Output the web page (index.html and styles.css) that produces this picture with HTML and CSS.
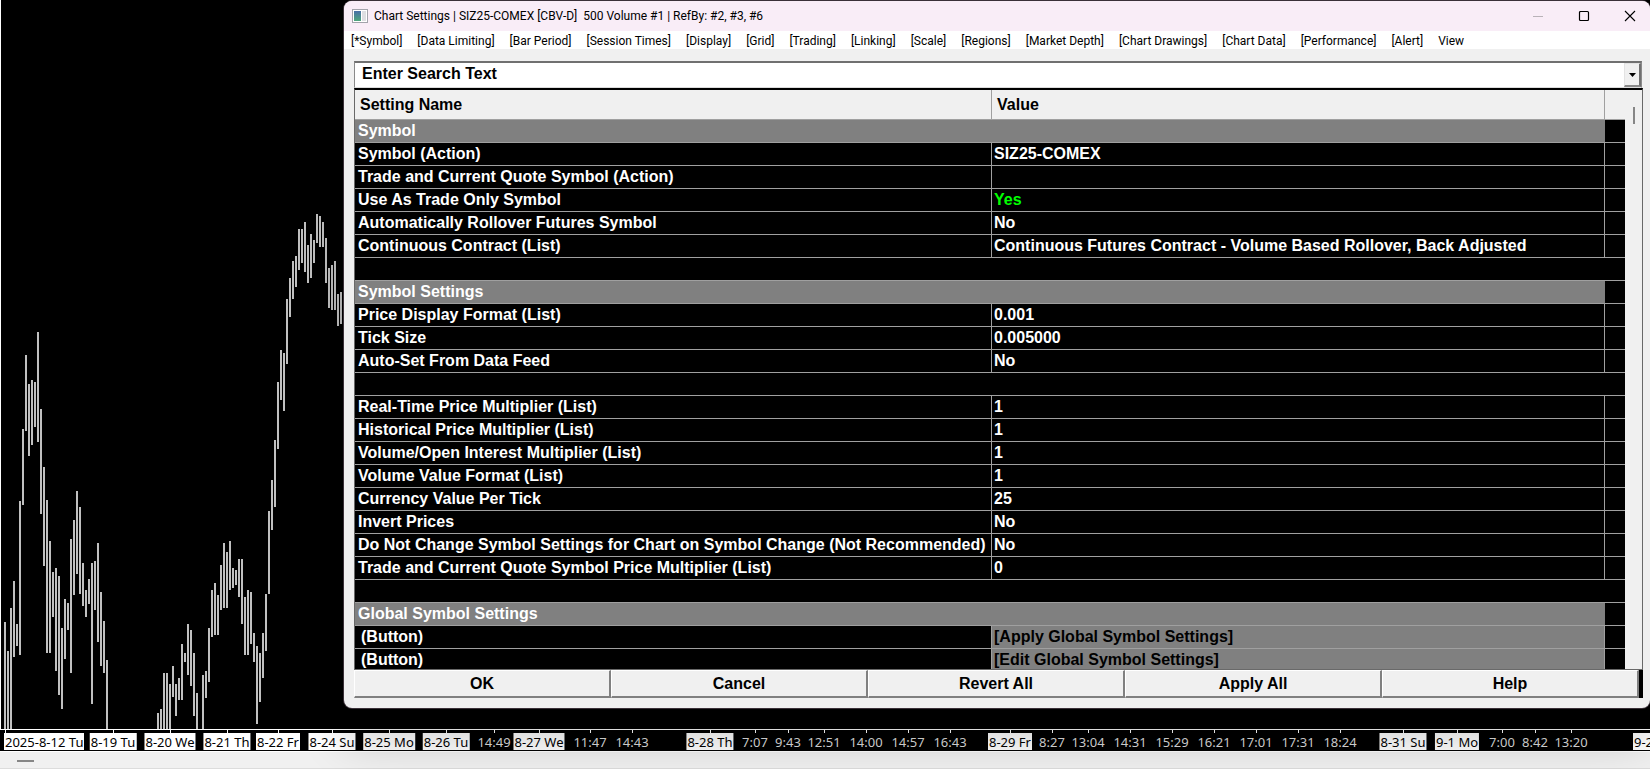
FILE: index.html
```
<!DOCTYPE html>
<html lang="en">
  <head>
  <meta charset="utf-8">
  <meta name="viewport" content="width=device-width, initial-scale=1">
  <title>Chart Settings</title>
  <link rel="stylesheet" href="styles.css">
  </head>
  <body>
    <main class="chart">
      <svg id="bars" class="bars" aria-hidden="true"></svg>
    </main>
    <div id="axis" class="axis"></div>
    <footer class="status"><span class="thumb"></span></footer>

    <section class="dialog" aria-label="Chart Settings">
      <header class="titlebar">
        <svg class="app-icon" width="16" height="14" viewBox="0 0 16 14">
          <defs>
            <linearGradient id="pane" x1="0" y1="0" x2="0" y2="1">
              <stop offset="0" stop-color="#4a6ea8"/>
              <stop offset="1" stop-color="#4fa67c"/>
            </linearGradient>
          </defs>
          <rect x="0.5" y="0.5" width="15" height="13" fill="#fff" stroke="#a3a3ab"/>
          <rect x="2" y="2" width="7" height="10" fill="url(#pane)"/>
          <rect x="10" y="2" width="4" height="10" fill="#dedee2"/>
        </svg>
        <h1>Chart Settings | SIZ25-COMEX [CBV-D]&nbsp; 500 Volume #1 | RefBy: #2, #3, #6</h1>
        <div class="window-buttons">
          <button type="button" aria-label="Minimize" disabled>
            <svg width="12" height="12" viewBox="0 0 12 12"><path d="M1 6.5h10" stroke="#b9b2b8" fill="none"/></svg>
          </button>
          <button type="button" aria-label="Maximize">
            <svg width="12" height="12" viewBox="0 0 12 12"><rect x="1.5" y="1.5" width="9" height="9" rx="1" stroke="#000" stroke-width="1.2" fill="none"/></svg>
          </button>
          <button type="button" aria-label="Close">
            <svg width="12" height="12" viewBox="0 0 12 12"><path d="M1 1l10 10M11 1L1 11" stroke="#000" stroke-width="1.1" fill="none"/></svg>
          </button>
        </div>
      </header>

      <nav class="menu">
        <button type="button">[*Symbol]</button>
        <button type="button">[Data Limiting]</button>
        <button type="button">[Bar Period]</button>
        <button type="button">[Session Times]</button>
        <button type="button">[Display]</button>
        <button type="button">[Grid]</button>
        <button type="button">[Trading]</button>
        <button type="button">[Linking]</button>
        <button type="button">[Scale]</button>
        <button type="button">[Regions]</button>
        <button type="button">[Market Depth]</button>
        <button type="button">[Chart Drawings]</button>
        <button type="button">[Chart Data]</button>
        <button type="button">[Performance]</button>
        <button type="button">[Alert]</button>
        <button type="button">View</button>
      </nav>

      <div class="content">
        <div class="search">
          <input type="text" value="Enter Search Text" aria-label="Search settings">
          <button type="button" aria-label="Show previous searches">
            <svg width="7" height="4" viewBox="0 0 7 4"><path d="M0 0h7L3.5 4z" fill="#000"/></svg>
          </button>
        </div>

        <div class="list">
          <div class="list-view">
            <table>
              <colgroup>
                <col class="col-name">
                <col>
                <col class="col-pad">
              </colgroup>
              <thead>
                <tr><th scope="col">Setting Name</th><th scope="col">Value</th><td></td></tr>
              </thead>
              <tbody>
                <tr class="group"><th colspan="2">Symbol</th><td></td></tr>
                <tr><td>Symbol (Action)</td><td>SIZ25-COMEX</td><td></td></tr>
                <tr><td>Trade and Current Quote Symbol (Action)</td><td></td><td></td></tr>
                <tr><td>Use As Trade Only Symbol</td><td class="yes">Yes</td><td></td></tr>
                <tr><td>Automatically Rollover Futures Symbol</td><td>No</td><td></td></tr>
                <tr><td>Continuous Contract (List)</td><td>Continuous Futures Contract - Volume Based Rollover, Back Adjusted</td><td></td></tr>
                <tr class="blank"><td colspan="3"></td></tr>
                <tr class="group"><th colspan="2">Symbol Settings</th><td></td></tr>
                <tr><td>Price Display Format (List)</td><td>0.001</td><td></td></tr>
                <tr><td>Tick Size</td><td>0.005000</td><td></td></tr>
                <tr><td>Auto-Set From Data Feed</td><td>No</td><td></td></tr>
                <tr class="blank"><td colspan="3"></td></tr>
                <tr><td>Real-Time Price Multiplier (List)</td><td>1</td><td></td></tr>
                <tr><td>Historical Price Multiplier (List)</td><td>1</td><td></td></tr>
                <tr><td>Volume/Open Interest Multiplier (List)</td><td>1</td><td></td></tr>
                <tr><td>Volume Value Format (List)</td><td>1</td><td></td></tr>
                <tr><td>Currency Value Per Tick</td><td>25</td><td></td></tr>
                <tr><td>Invert Prices</td><td>No</td><td></td></tr>
                <tr><td>Do Not Change Symbol Settings for Chart on Symbol Change (Not Recommended)</td><td>No</td><td></td></tr>
                <tr><td>Trade and Current Quote Symbol Price Multiplier (List)</td><td>0</td><td></td></tr>
                <tr class="blank"><td colspan="3"></td></tr>
                <tr class="group"><th colspan="2">Global Symbol Settings</th><td></td></tr>
                <tr class="action"><td>(Button)</td><td><button type="button">[Apply Global Symbol Settings]</button></td><td></td></tr>
                <tr class="action"><td>(Button)</td><td><button type="button">[Edit Global Symbol Settings]</button></td><td></td></tr>
              </tbody>
            </table>
          </div>
          <div class="scrollbar"><span class="thumb"></span></div>
        </div>

        <div class="buttons">
          <button type="button">OK</button>
          <button type="button">Cancel</button>
          <button type="button">Revert All</button>
          <button type="button">Apply All</button>
          <button type="button">Help</button>
        </div>
      </div>
    </section>
    <script src="chart.js"></script>
  </body>
</html>
```
FILE: styles.css
```
* {
  box-sizing: border-box;
}

body {
  margin: 0;
  height: 100vh;
  display: flex;
  flex-direction: column;
  overflow: hidden;
  background: #000;
  font-family: "Liberation Sans", Arial, sans-serif;
}

button {
  margin: 0;
  padding: 0;
  border: 0;
  background: none;
  color: inherit;
  font: inherit;
}

/* chart behind the dialog */

.chart {
  flex: 1;
  min-height: 0;
  border-left: 1px solid #fff;
  border-bottom: 1px solid #fff;
}

.bars {
  display: block;
  width: 100%;
  height: 100%;
  fill: #c0c0c0;
}

.axis {
  position: relative;
  height: 21px;
  overflow: hidden;
  color: #dcdcdc;
  font: 13px/17px "Noto Sans", sans-serif;
  white-space: nowrap;
}

.axis .tick {
  position: absolute;
  top: 0;
  width: 1px;
  height: 3px;
  background: #fff;
}

.axis .label {
  position: absolute;
  top: 3px;
  height: 17px;
  padding: 0 1px;
  line-height: 18px;
  transform: translateX(-50%);
}

.axis .edge {
  transform: none;
}

.axis .day {
  background: #fff;
  color: #000;
}

.status {
  height: 18px;
  padding: 8px 17px;
  background: #f0f0f0;
  border-top: 1px solid #fff;
  border-bottom: 1px solid #dcdcdc;
}

.status .thumb {
  display: block;
  width: 17px;
  height: 2px;
  background: #868686;
}

/* dialog window */

.dialog {
  position: absolute;
  top: 1px;
  right: 0;
  bottom: 61px;
  left: 344px;
  display: flex;
  flex-direction: column;
  overflow: hidden;
  border-radius: 8px;
  background: #f0f0f0;
  box-shadow: 0 0 0 1px #3a3038, 0 32px 48px rgba(0, 0, 0, 0.2);
}

.titlebar {
  display: flex;
  align-items: center;
  height: 30px;
  padding-left: 8px;
  background: #f9edf7;
}

.titlebar h1 {
  flex: 1;
  margin: 0 0 0 6px;
  font: 12px/16px Roboto, sans-serif;
}

.window-buttons {
  display: flex;
  margin-right: -3px;
}

.window-buttons button {
  display: flex;
  align-items: center;
  justify-content: center;
  width: 46px;
  height: 30px;
}

.menu {
  display: flex;
  gap: 15px;
  height: 18px;
  padding-left: 7px;
  background: #fff;
  font: 12px/20px Roboto, sans-serif;
  white-space: nowrap;
}

.content {
  flex: 1;
  min-height: 0;
  display: flex;
  flex-direction: column;
  padding: 12px 7px 10px 10px;
  font-size: 16px;
  font-weight: bold;
}

.search {
  display: flex;
  height: 27px;
  margin-right: 1px;
  border: 1px solid #8a8a8a;
  border-top: 2px solid #707070;
  border-bottom-color: #dcdcdc;
  background: #fff;
}

.search input {
  flex: 1;
  min-width: 0;
  padding: 0 7px 2px;
  border: 0;
  outline: 0;
  background: none;
  color: #000;
  font: inherit;
}

.search button {
  display: flex;
  align-items: center;
  justify-content: center;
  width: 17px;
  background: #f0f0f0;
  border: 1px solid #e3e3e3;
  border-right: 2px solid #707070;
  border-bottom: 2px solid #8a8a8a;
}

.list {
  flex: 1;
  min-height: 0;
  display: flex;
  border: 1px solid #696969;
  border-top: 2px solid #000;
}

.list-view {
  flex: 1;
  min-width: 0;
  overflow: hidden;
  background: #000;
}

table {
  width: 100%;
  table-layout: fixed;
  border-collapse: separate;
  border-spacing: 0;
}

.col-name {
  width: 637px;
}

.col-pad {
  width: 20px;
}

td,
th {
  height: 23px;
  padding: 0 3px 1px;
  border-right: 1px solid #a0a0a0;
  border-bottom: 1px solid #a0a0a0;
  color: #fff;
  font-weight: bold;
  line-height: 18px;
  text-align: left;
  white-space: nowrap;
}

td:nth-child(2) {
  padding-left: 2px;
}

tr > :last-child {
  border-right: 0;
}

thead th,
thead td {
  height: 30px;
  padding: 0 5px;
  background: #f0f0f0;
  color: #000;
}

.group th {
  background: #808080;
  border-right: 0;
}

.yes {
  color: #00ff00;
}

.action td:first-child {
  padding-left: 6px;
}

.action td:nth-child(2) {
  background: #808080;
  color: #000;
}

.action button {
  display: block;
}

.scrollbar {
  width: 17px;
  padding: 17px 7px;
}

.scrollbar .thumb {
  display: block;
  width: 2px;
  height: 17px;
  margin-left: auto;
  background: #868686;
}

.buttons {
  display: flex;
  height: 28px;
  padding-right: 4px;
  background: #000;
}

.buttons button {
  flex: 1;
  background: #f0f0f0;
  border: 1px solid #fff;
  border-right: 2px solid #808080;
  border-bottom: 2px solid #808080;
  color: #000;
}
```
FILE: chart.js
```
// x, high, low
var bars = [
    [4, 622, 729], [7, 651, 729], [10, 608, 729], [13, 581, 657], [16, 624, 646],
    [19, 501, 655], [22, 429, 505], [25, 355, 431], [28, 384, 456], [31, 380, 445],
    [34, 382, 427], [37, 332, 442], [40, 409, 514], [43, 467, 566], [46, 500, 653],
    [49, 541, 653], [52, 572, 617], [55, 568, 671], [58, 576, 695], [61, 628, 709],
    [64, 599, 659], [67, 603, 630], [70, 539, 673], [73, 520, 595], [76, 491, 574],
    [79, 507, 594], [82, 563, 606], [85, 590, 617], [88, 579, 604], [91, 563, 704],
    [94, 561, 610], [97, 543, 642], [100, 592, 666], [103, 621, 673], [106, 660, 729],
    [157, 713, 729], [160, 709, 729], [163, 673, 729], [166, 673, 729], [169, 684, 729],
    [172, 666, 697], [175, 684, 716], [178, 678, 700], [181, 644, 700], [184, 653, 662],
    [187, 624, 675], [190, 630, 686], [193, 653, 716], [196, 693, 729], [202, 675, 729],
    [205, 671, 698], [208, 628, 682], [211, 590, 637], [214, 583, 635], [217, 595, 635],
    [220, 565, 610], [223, 543, 608], [226, 552, 608], [229, 541, 590], [232, 568, 588],
    [235, 570, 585], [238, 559, 597], [241, 559, 624], [244, 597, 655], [247, 590, 655],
    [250, 592, 644], [253, 633, 662], [256, 646, 724], [259, 653, 702], [262, 633, 678],
    [265, 594, 651], [268, 511, 594], [271, 480, 530], [274, 440, 507], [277, 382, 449],
    [280, 350, 400], [283, 353, 411], [286, 299, 364], [289, 278, 317], [292, 261, 299],
    [295, 256, 287], [298, 229, 270], [301, 229, 263], [304, 222, 272], [307, 245, 283],
    [310, 234, 278], [313, 240, 263], [316, 214, 243], [319, 216, 247], [322, 222, 247],
    [325, 238, 283], [328, 268, 308], [331, 265, 310], [334, 261, 310], [337, 294, 326],
    [340, 292, 324]
];

var times = [
    [5, "2025-8-12 Tu"], [113, "8-19 Tu"], [170, "8-20 We"], [227, "8-21 Th"],
    [278, "8-22 Fr"], [332, "8-24 Su"], [389, "8-25 Mo"], [446, "8-26 Tu"],
    [494, "14:49"], [539, "8-27 We"], [590, "11:47"], [632, "14:43"],
    [710, "8-28 Th"], [755, "7:07"], [788, "9:43"], [824, "12:51"],
    [866, "14:00"], [908, "14:57"], [950, "16:43"], [1010, "8-29 Fr"],
    [1052, "8:27"], [1088, "13:04"], [1130, "14:31"], [1172, "15:29"],
    [1214, "16:21"], [1256, "17:01"], [1298, "17:31"], [1340, "18:24"],
    [1403, "8-31 Su"], [1457, "9-1 Mo"], [1502, "7:00"], [1535, "8:42"],
    [1571, "13:20"]
];

var svg = document.getElementById("bars");
bars.forEach(function(b) {
    var r = document.createElementNS("http://www.w3.org/2000/svg", "rect");
    r.setAttribute("x", b[0] - 1); // chart has a 1px left border
    r.setAttribute("y", b[1]);
    r.setAttribute("width", 2);
    r.setAttribute("height", b[2] - b[1]);
    svg.appendChild(r);
});

function addSpan(clas, x, text) {
    var s = document.createElement("span");
    s.className = clas;
    s.style.left = x + "px";
    s.textContent = text;
    document.getElementById("axis").appendChild(s);
}

times.forEach(function(t, i) {
    var clas = "label";
    if (t[1].indexOf("-") != -1) {
        clas += " day";
    }
    // no room to centre the first date on its tick
    if (i == 0) {
        clas += " edge";
    }
    addSpan("tick", t[0], "");
    addSpan(clas, i == 0 ? t[0] - 1 : t[0], t[1]);
});

// next date, its tick is past the right edge
addSpan("label day edge", 1633, "9-2");
```
